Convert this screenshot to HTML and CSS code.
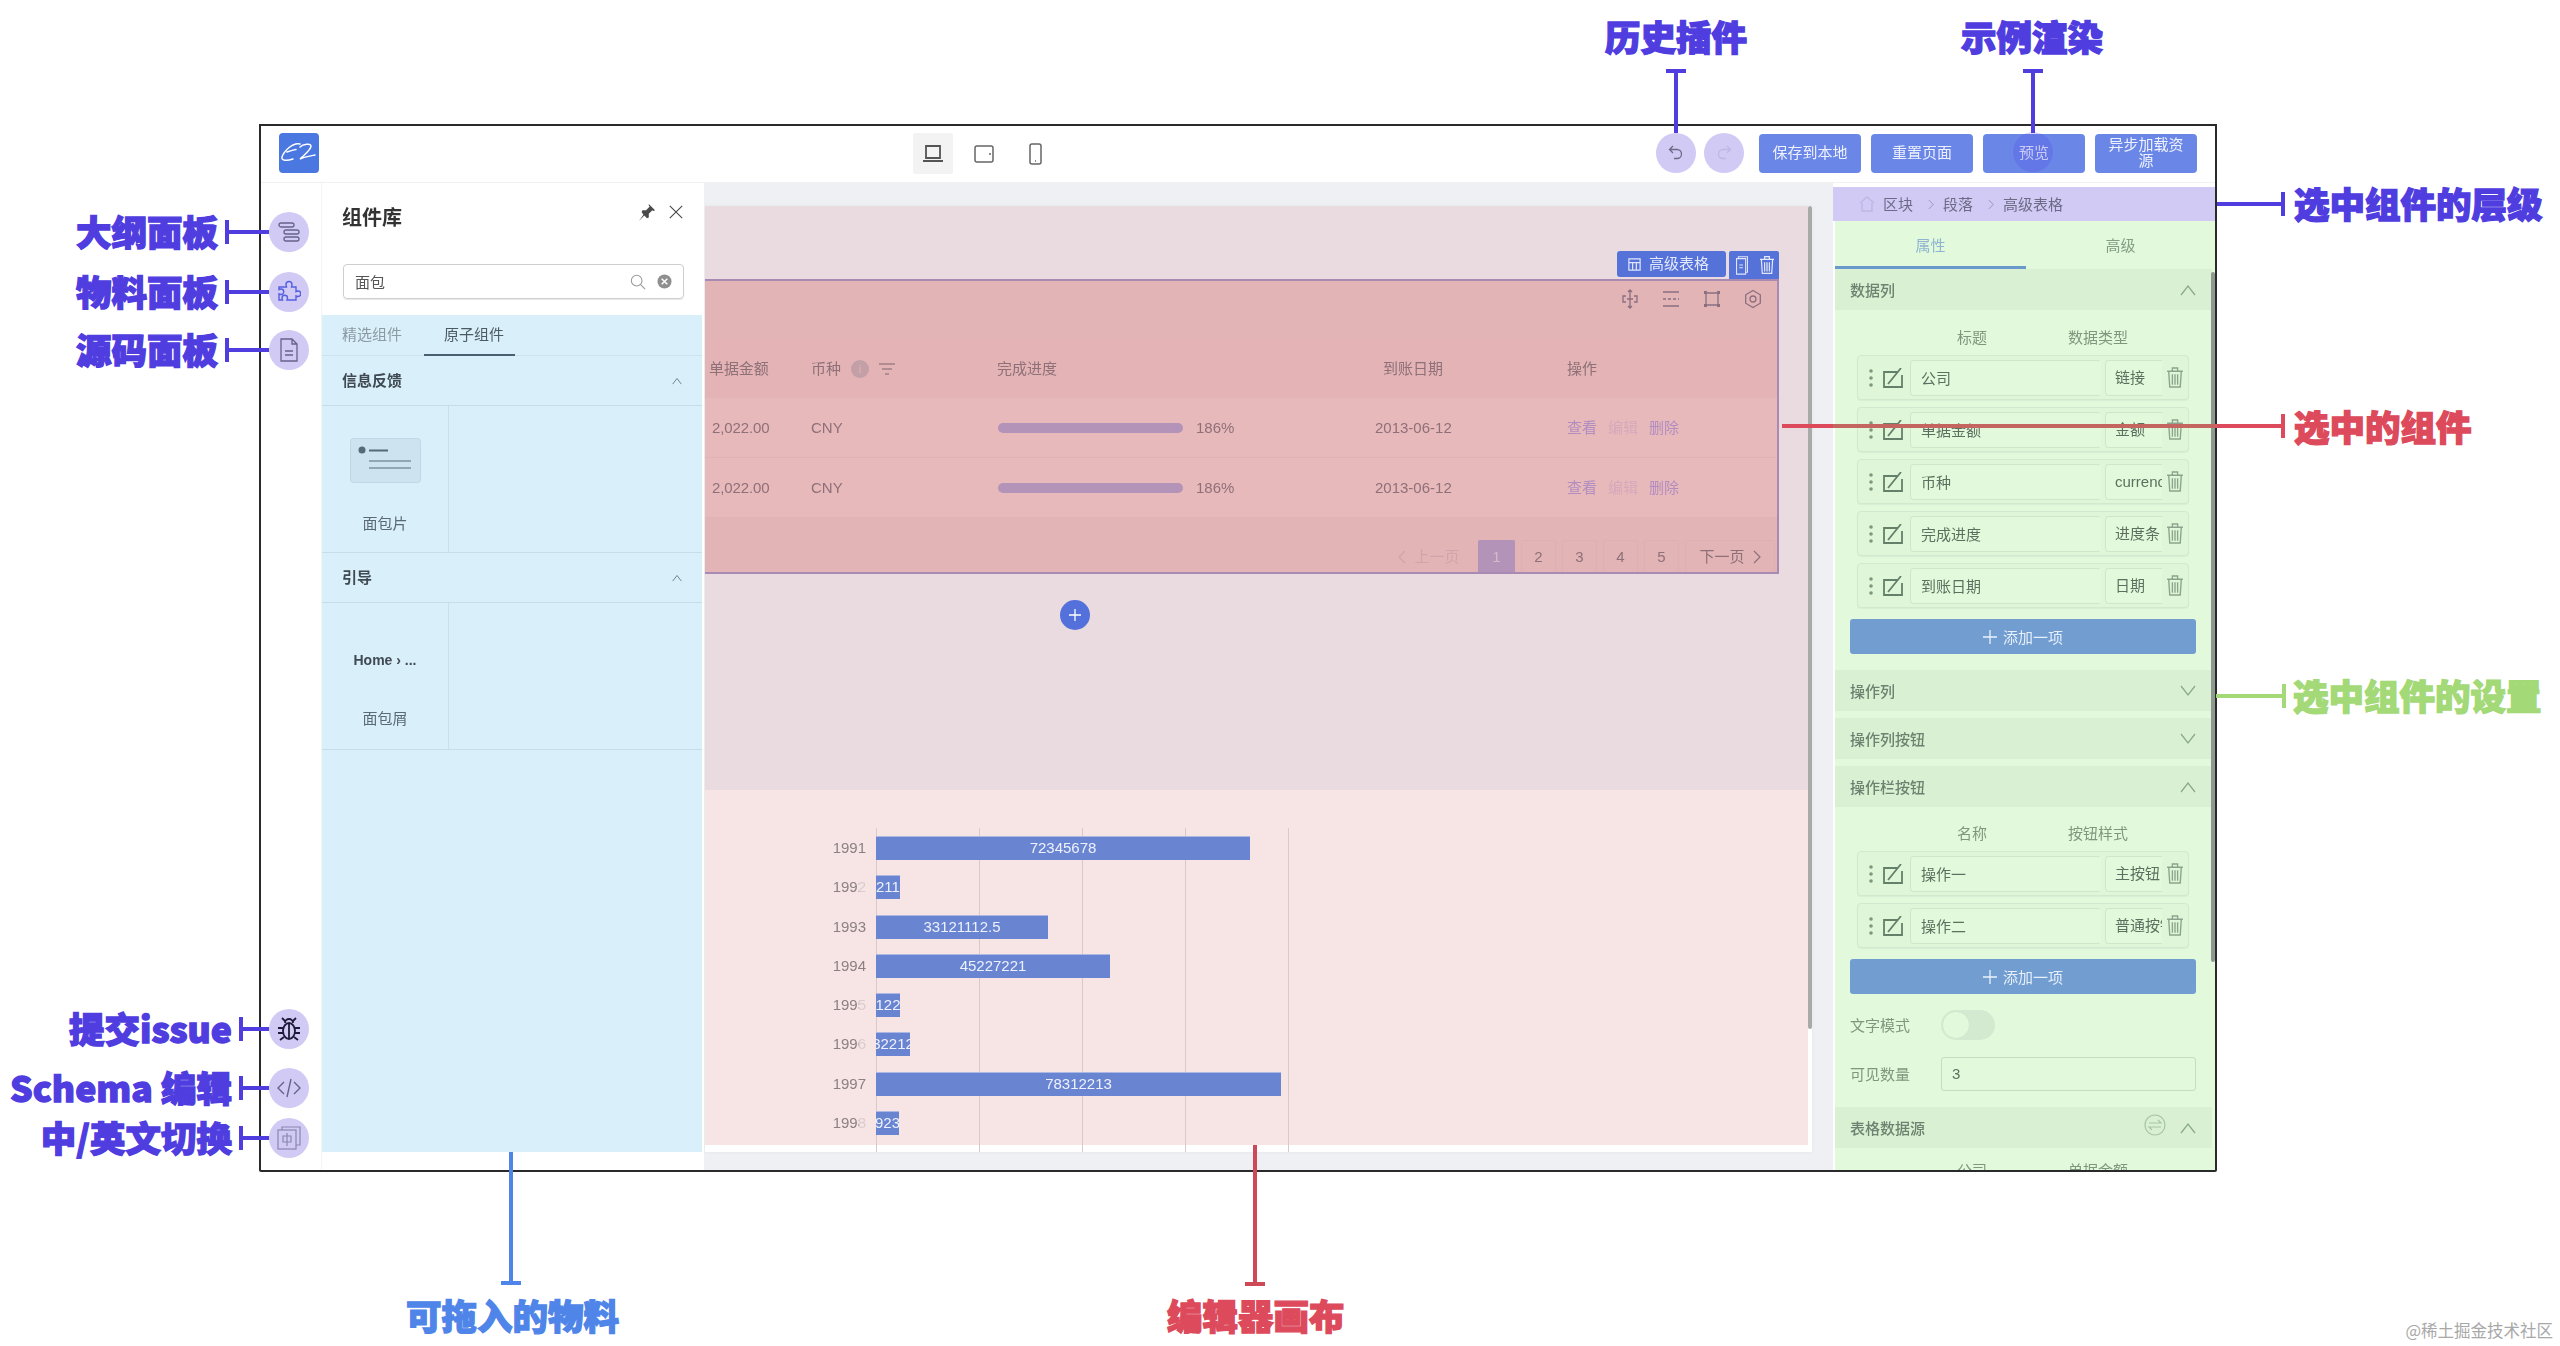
FILE: index.html
```html
<!DOCTYPE html>
<html lang="zh-CN">
<head>
<meta charset="utf-8">
<title>低代码引擎 编辑器</title>
<link rel="stylesheet" href="styles.css">
</head>
<body>
<svg class="defs" aria-hidden="true">
  <symbol id="trash" viewBox="0 0 17 20"><path d="M1 4h15M6 4V1h5v3M2.500 4l1 15h10l1-15M6 7v10M8.500 7v10M11 7v10" fill="none" stroke="currentColor" stroke-width="1.300"/></symbol>
  <symbol id="edit" viewBox="0 0 21 20"><path d="M15 4H1v15h18V7M5 16L18 0" fill="none" stroke="currentColor" stroke-width="1.800"/></symbol>
  <symbol id="dots" viewBox="0 0 6 20"><circle cx="3" cy="3" r="1.800" fill="currentColor"/><circle cx="3" cy="10" r="1.800" fill="currentColor"/><circle cx="3" cy="17" r="1.800" fill="currentColor"/></symbol>
  <symbol id="up" viewBox="0 0 16 12"><path d="M1 11L8 2l7 9" fill="none" stroke="currentColor" stroke-width="1.300"/></symbol>
  <symbol id="down" viewBox="0 0 16 12"><path d="M1 1l7 9 7-9" fill="none" stroke="currentColor" stroke-width="1.300"/></symbol>
</svg>

<div class="stage">
  <div class="window">
    <header class="topbar">
      <svg class="logo" viewBox="0 0 40 40"><rect width="40" height="40" rx="4" fill="#4a78e0"/><path d="M21 11C14 9 5 18 3 24c-1 4 5 4 11 2M8 19c3-1 6-2 9-2.500M21 14c3-3 11-4 11-1 0 4-7 9-11 13 4-2 10-3 15-4" fill="none" stroke="#fff" stroke-width="1.500" stroke-linecap="round"/></svg>
      <div class="devices">
        <span class="device active"><svg viewBox="0 0 24 24" class="device-ic"><path d="M5 4h14v12H5zM2 19h20" fill="none" stroke="currentColor" stroke-width="1.800"/></svg></span>
        <span class="device"><svg viewBox="0 0 24 24" class="device-ic"><rect x="3" y="4" width="18" height="16" rx="2" fill="none" stroke="currentColor" stroke-width="1.500"/><path d="M18 11v2" stroke="currentColor" stroke-width="1.500"/></svg></span>
        <span class="device"><svg viewBox="0 0 24 24" class="device-ic"><rect x="7" y="2" width="11" height="20" rx="2" fill="none" stroke="currentColor" stroke-width="1.500"/><path d="M12 19h1" stroke="currentColor" stroke-width="1.500"/></svg></span>
      </div>
      <div class="actions">
        <span class="round"><svg viewBox="0 0 20 20" class="round-ic"><path d="M7 3L3.500 6.500 7 10M4 6.500h7a4.500 4.500 0 0 1 0 9H8" fill="none" stroke="#6d6a85" stroke-width="1.300"/></svg></span>
        <span class="round"><svg viewBox="0 0 20 20" class="round-ic"><path d="M13 3l3.500 3.500L13 10M16 6.500H9a4.500 4.500 0 0 0 0 9h3" fill="none" stroke="#bdb8e4" stroke-width="1.300"/></svg></span>
        <span class="btn">保存到本地</span>
        <span class="btn">重置页面</span>
        <span class="btn">预览</span>
        <span class="btn">异步加载资源</span>
      </div>
    </header>

    <div class="workspace">
      <nav class="rail">
        <div class="rail-top">
          <span class="circle"><svg viewBox="0 0 24 24" class="circle-ic"><g fill="none" stroke="#66638a" stroke-width="1.300"><rect x="2" y="3" width="15" height="4" rx="2"/><rect x="7" y="10" width="15" height="4" rx="2"/><rect x="7" y="17" width="15" height="4" rx="2"/></g></svg></span>
          <span class="circle"><svg viewBox="0 0 24 24" class="circle-ic"><path d="M9 4.500a3 3 0 0 1 6 0c0 1-.5 1.500-.5 2.500H19v4.500c1-.5 1.500-.5 2-.5a2.700 2.700 0 0 1 0 5.500c-.5 0-1 0-2-.5v4H10c.5-1 .5-1.500.5-2a2.700 2.700 0 0 0-5.500 0c0 .5 0 1 .5 2H2v-6c1 .5 1.500.5 2 .5a2.700 2.700 0 0 0 0-5.500c-.5 0-1 0-2 .5V7h7.500C9.500 6 9 5.500 9 4.500z" fill="none" stroke="#5560e0" stroke-width="1.400"/></svg></span>
          <span class="circle"><svg viewBox="0 0 24 24" class="circle-ic"><path d="M4 1h11l5 5v17H4zM15 1v5h5M8 13h8M8 17h8" fill="none" stroke="#66638a" stroke-width="1.300"/></svg></span>
        </div>
        <div class="rail-bottom">
          <span class="circle"><svg viewBox="0 0 24 24" class="circle-ic"><g fill="none" stroke="#1e1b3a" stroke-width="1.800"><ellipse cx="12" cy="14" rx="6" ry="8"/><path d="M8 6a4 4 0 0 1 8 0M12 6v16M6 11H1M18 11h5M6 16H1M18 16h5M7 20l-4 3M17 20l4 3M8 4L5 1M16 4l3-3"/></g></svg></span>
          <span class="circle"><svg viewBox="0 0 24 24" class="circle-ic"><path d="M7 6l-6 6 6 6M17 6l6 6-6 6M14 3l-4 18" fill="none" stroke="#66638a" stroke-width="1.400"/></svg></span>
          <span class="circle"><svg viewBox="0 0 24 24" class="circle-ic"><g fill="none" stroke="#8a86b0" stroke-width="1.200"><rect x="1" y="4" width="18" height="19"/><path d="M5 4V1h18v18h-4"/><path d="M6 10h8v6H6zM10 7v13"/></g></svg></span>
        </div>
      </nav>

      <aside class="library">
        <div class="lib-head">
          <div class="lib-title-row">
            <h2 class="lib-title">组件库</h2>
            <svg viewBox="0 0 20 20" class="pin"><path d="M12 1l7 7-2 1-1-1-4 4 0 4-2 1-3-3-6 6 5-7-2-3 1-2h4l4-4-1-1z" fill="#4a4a4a"/></svg>
            <svg viewBox="0 0 18 18" class="close"><path d="M2 2l14 14M16 2L2 16" stroke="#444" stroke-width="1.200"/></svg>
          </div>
          <div class="search">
            <span class="search-text">面包</span>
            <svg viewBox="0 0 18 18" class="search-ic"><circle cx="7.500" cy="7.500" r="6" fill="none" stroke="#9a9a9a" stroke-width="1.200"/><path d="M12 12l5 5" stroke="#9a9a9a" stroke-width="1.200"/></svg>
            <svg viewBox="0 0 16 16" class="clear-ic"><circle cx="8" cy="8" r="7.500" fill="#8f8f8f"/><path d="M5 5l6 6M11 5l-6 6" stroke="#fff" stroke-width="1.600"/></svg>
          </div>
        </div>
        <div class="lib-body">
          <div class="lib-tabs">
            <span class="lib-tab">精选组件</span>
            <span class="lib-tab current">原子组件</span>
          </div>
          <div class="lib-group"><b>信息反馈</b><svg class="chev"><use href="#up"/></svg></div>
          <div class="lib-cards">
            <div class="lib-card">
              <svg viewBox="0 0 71 45" class="thumb"><rect x=".5" y=".5" width="70" height="44" rx="3" fill="#cde3ef" stroke="#c0d7e4"/><circle cx="12" cy="12" r="3.500" fill="#566a78"/><path d="M19 12.500h19" stroke="#566a78" stroke-width="2"/><path d="M19 23h42M19 30h42" stroke="#90a8b6" stroke-width="2"/></svg>
              <span class="card-name">面包片</span>
            </div>
          </div>
          <div class="lib-group"><b>引导</b><svg class="chev"><use href="#up"/></svg></div>
          <div class="lib-cards">
            <div class="lib-card crumb">
              <span class="crumb-demo">Home › ...</span>
              <span class="card-name">面包屑</span>
            </div>
          </div>
        </div>
      </aside>

      <main class="canvas">
        <div class="frame">
          <section class="block">
            <div class="sel-tools">
              <span class="sel-name"><svg viewBox="0 0 16 16" class="sel-ic"><path d="M2 2h12v12H2zM2 6h12M6 6v8M10 6v8" fill="none" stroke="#dfe4fb" stroke-width="1.300"/></svg>高级表格</span>
              <span class="sel-ops">
                <svg viewBox="0 0 16 22" class="sel-op"><path d="M4 4V2h10v17h-2M2 4h10v17H2zM5 11h4M5 14h4" fill="none" stroke="#dfe4fb" stroke-width="1.200"/></svg>
                <svg viewBox="0 0 17 20" class="sel-op"><use href="#trash"/></svg>
              </span>
            </div>
            <div class="selected">
              <div class="tbl-tools">
                <svg viewBox="0 0 20 20" class="tool"><path d="M6 7H3v6h3M14 7h3v6h-3M10 1v18M8 3l2-2 2 2M8 17l2 2 2-2M7 10h6" fill="none" stroke="#8b6f80" stroke-width="1.300"/></svg>
                <svg viewBox="0 0 20 20" class="tool"><path d="M2 3h16M2 17h16" fill="none" stroke="#8b6f80" stroke-width="1.300"/><path d="M2 10h16" fill="none" stroke="#8b6f80" stroke-width="1.300" stroke-dasharray="3 2"/></svg>
                <svg viewBox="0 0 20 20" class="tool"><path d="M4 4h12v12H4z" fill="none" stroke="#8b6f80" stroke-width="1.300"/><path d="M2 2h3v3H2zM15 2h3v3h-3zM2 15h3v3H2zM15 15h3v3h-3z" fill="#8b6f80"/></svg>
                <svg viewBox="0 0 20 20" class="tool"><path d="M10 1.500l7.300 4.250v8.500L10 18.500l-7.300-4.250v-8.500z" fill="none" stroke="#8b6f80" stroke-width="1.300"/><circle cx="10" cy="10" r="3" fill="none" stroke="#8b6f80" stroke-width="1.300"/></svg>
              </div>
              <div class="tbl-row tbl-head">
                <span class="first">单据金额</span>
                <span class="cur-head">币种<i class="info">i</i><svg viewBox="0 0 16 12" class="filter"><path d="M0 1h16M3 6h10M6 11h4" stroke="#a08088" stroke-width="1.300"/></svg></span>
                <span>完成进度</span>
                <span class="date">到账日期</span>
                <span>操作</span>
              </div>
              <div class="tbl-row">
                <span class="first">2,022.00</span><span>CNY</span>
                <span class="prog"><i class="prog-bar"></i>186%</span>
                <span class="date">2013-06-12</span>
                <span class="ops"><a>查看</a><a class="off">编辑</a><a>删除</a></span>
              </div>
              <div class="tbl-row">
                <span class="first">2,022.00</span><span>CNY</span>
                <span class="prog"><i class="prog-bar"></i>186%</span>
                <span class="date">2013-06-12</span>
                <span class="ops"><a>查看</a><a class="off">编辑</a><a>删除</a></span>
              </div>
              <div class="pager">
                <span class="pg prev"><svg viewBox="0 0 8 14" class="pg-arrow"><path d="M7 1L1 7l6 6" fill="none" stroke="currentColor" stroke-width="1.200"/></svg>上一页</span>
                <span class="pg num on">1</span>
                <span class="pg num">2</span>
                <span class="pg num">3</span>
                <span class="pg num">4</span>
                <span class="pg num">5</span>
                <span class="pg next">下一页<svg viewBox="0 0 8 14" class="pg-arrow"><path d="M1 1l6 6-6 6" fill="none" stroke="currentColor" stroke-width="1.200"/></svg></span>
              </div>
            </div>
            <span class="add-block"><svg viewBox="0 0 14 14" class="add-ic"><path d="M7 1v12M1 7h12" stroke="#fff" stroke-width="1.300"/></svg></span>
          </section>
          <section class="chart">
            <div class="years">
              <span>1991</span><span class="cut">1992</span><span>1993</span><span>1994</span><span class="cut">1995</span><span class="cut">1996</span><span>1997</span><span class="cut">1998</span>
            </div>
            <div class="plot">
              <div class="bar" style="width:374px">72345678</div>
              <div class="bar" style="width:24px">211</div>
              <div class="bar" style="width:172px">33121112.5</div>
              <div class="bar" style="width:234px">45227221</div>
              <div class="bar" style="width:24px">122</div>
              <div class="bar" style="width:34px">32212</div>
              <div class="bar" style="width:405px">78312213</div>
              <div class="bar" style="width:23px">923</div>
            </div>
          </section>
          <span class="scroll"></span>
        </div>
      </main>

      <aside class="settings">
        <div class="crumbs">
          <svg viewBox="0 0 16 16" class="crumb-ic"><path d="M1 7L8 1l7 6M3 7v8h10V7" fill="none" stroke="#bdb8e4" stroke-width="1.500"/></svg>
          <span>区块</span><svg class="crumb-sep" viewBox="0 0 8 12"><path d="M1 1l5 5-5 5" fill="none" stroke="#918eb0"/></svg><span>段落</span><svg class="crumb-sep" viewBox="0 0 8 12"><path d="M1 1l5 5-5 5" fill="none" stroke="#918eb0"/></svg><span>高级表格</span>
        </div>
        <div class="green">
          <div class="set-tabs"><span class="set-tab current">属性</span><span class="set-tab">高级</span></div>
          <div class="sec-head"><b>数据列</b><svg class="sec-chev"><use href="#up"/></svg></div>
          <div class="cols"><span>标题</span><span>数据类型</span></div>
          <div class="items">
            <div class="item"><svg class="dots"><use href="#dots"/></svg><svg class="edit"><use href="#edit"/></svg><span class="f-name">公司</span><span class="f-type">链接</span><svg class="del"><use href="#trash"/></svg></div>
            <div class="item"><svg class="dots"><use href="#dots"/></svg><svg class="edit"><use href="#edit"/></svg><span class="f-name">单据金额</span><span class="f-type">金额</span><svg class="del"><use href="#trash"/></svg></div>
            <div class="item"><svg class="dots"><use href="#dots"/></svg><svg class="edit"><use href="#edit"/></svg><span class="f-name">币种</span><span class="f-type">currency</span><svg class="del"><use href="#trash"/></svg></div>
            <div class="item"><svg class="dots"><use href="#dots"/></svg><svg class="edit"><use href="#edit"/></svg><span class="f-name">完成进度</span><span class="f-type">进度条</span><svg class="del"><use href="#trash"/></svg></div>
            <div class="item"><svg class="dots"><use href="#dots"/></svg><svg class="edit"><use href="#edit"/></svg><span class="f-name">到账日期</span><span class="f-type">日期</span><svg class="del"><use href="#trash"/></svg></div>
          </div>
          <div class="add-item"><svg viewBox="0 0 14 14" class="plus"><path d="M7 0v14M0 7h14" stroke="#eaf3fb" stroke-width="1.300"/></svg>添加一项</div>
          <div class="sec-head spaced"><b>操作列</b><svg class="sec-chev"><use href="#down"/></svg></div>
          <div class="sec-head gap"><b>操作列按钮</b><svg class="sec-chev"><use href="#down"/></svg></div>
          <div class="sec-head gap"><b>操作栏按钮</b><svg class="sec-chev"><use href="#up"/></svg></div>
          <div class="cols tight"><span>名称</span><span>按钮样式</span></div>
          <div class="items">
            <div class="item"><svg class="dots"><use href="#dots"/></svg><svg class="edit"><use href="#edit"/></svg><span class="f-name">操作一</span><span class="f-type">主按钮</span><svg class="del"><use href="#trash"/></svg></div>
            <div class="item"><svg class="dots"><use href="#dots"/></svg><svg class="edit"><use href="#edit"/></svg><span class="f-name">操作二</span><span class="f-type">普通按钮</span><svg class="del"><use href="#trash"/></svg></div>
          </div>
          <div class="add-item"><svg viewBox="0 0 14 14" class="plus"><path d="M7 0v14M0 7h14" stroke="#eaf3fb" stroke-width="1.300"/></svg>添加一项</div>
          <div class="field first-field"><label>文字模式</label><span class="toggle"><i></i></span></div>
          <div class="field"><label>可见数量</label><span class="num-input">3</span></div>
          <div class="sec-head spaced"><b>表格数据源</b><svg viewBox="0 0 22 22" class="swap"><circle cx="11" cy="11" r="10" fill="none" stroke="#a9c4a8" stroke-width="1.200"/><path d="M5 9h12l-3-3M17 13H5l3 3" fill="none" stroke="#a9c4a8" stroke-width="1.200"/></svg><svg class="sec-chev"><use href="#up"/></svg></div>
          <div class="cols last"><span>公司</span><span>单据金额</span></div>
          <span class="set-scroll"></span>
        </div>
      </aside>
    </div>
  </div>
</div>

<svg class="overlay" viewBox="0 0 2560 1346" aria-hidden="true">
  <circle cx="2033" cy="152" r="20" fill="#4c3fe0" fill-opacity=".22"/>
  <g stroke="#4f3de0" stroke-width="4" fill="none">
    <path d="M1676 71v62M1666 71h20M2033 71v62M2023 71h20"/>
    <path d="M2217 204h66M2283 192v24"/>
    <path d="M227 232h42M227 220v24M227 292h42M227 280v24M227 350h42M227 338v24"/>
    <path d="M241 1029h28M241 1017v24M241 1088h28M241 1076v24M241 1138h28M241 1126v24"/>
  </g>
  <g fill="none" stroke-width="4">
    <path d="M1782 426h51" stroke="#dc4a5c"/>
    <path d="M1833 426h384" stroke="#c4655f"/>
    <path d="M2217 426h66M2283 414v24" stroke="#dc4a5c"/>
    <path d="M1255 1145v139M1245 1284h20" stroke="#cf4858"/>
    <path d="M2216 696h68M2284 684v24" stroke="#a3d977"/>
    <path d="M511 1152v131M501 1283h20" stroke="#4f85e8"/>
  </g>
</svg>

<span class="note violet n-history">历史插件</span>
<span class="note violet n-demo">示例渲染</span>
<span class="note violet n-level">选中组件的层级</span>
<span class="note red n-selected">选中的组件</span>
<span class="note green-text n-setting">选中组件的设置</span>
<span class="note violet n-outline">大纲面板</span>
<span class="note violet n-material">物料面板</span>
<span class="note violet n-source">源码面板</span>
<span class="note violet n-issue">提交issue</span>
<span class="note violet n-schema">Schema 编辑</span>
<span class="note violet n-lang">中/英文切换</span>
<span class="note blue n-drag">可拖入的物料</span>
<span class="note red n-canvas">编辑器画布</span>
<span class="watermark">@稀土掘金技术社区</span>
</body>
</html>
```

FILE: styles.css
```css
* { box-sizing: border-box; }
html, body { margin: 0; padding: 0; }
body {
  position: relative;
  width: 2560px;
  height: 1346px;
  overflow: hidden;
  background: #fff;
  font: 15px/20px "Liberation Sans", "Noto Sans CJK SC", sans-serif;
  color: #555;
}
.defs { position: absolute; width: 0; height: 0; }
.stage { padding: 124px 0 0 259px; filter: blur(.4px); }
.window {
  width: 1958px;
  height: 1048px;
  border: 2px solid #2a2a2a;
  border-radius: 0 0 2px 2px;
  display: flex;
  flex-direction: column;
  overflow: hidden;
  background: #fff;
}

/* top bar */
.topbar {
  height: 57px;
  flex: none;
  display: flex;
  align-items: flex-start;
  padding: 7px 18px 0;
  border-bottom: 1px solid #f1f1f1;
}
.logo { width: 40px; height: 40px; flex: none; }
.devices { display: flex; margin-left: 594px; }
.device { width: 40px; height: 41px; margin-right: 11px; display: flex; align-items: center; justify-content: center; color: #666; border-radius: 2px; }
.device.active { background: #f3f3f3; color: #555; }
.device-ic { width: 24px; height: 24px; }
.actions { margin-left: auto; display: flex; align-items: center; }
.round { width: 40px; height: 40px; border-radius: 50%; background: #d0caf5; display: flex; align-items: center; justify-content: center; margin-right: 8px; }
.round + .round { margin-right: 15px; }
.round-ic { width: 20px; height: 20px; }
.btn {
  width: 102px; height: 39px; margin-left: 10px;
  flex: none;
  display: flex; align-items: center; justify-content: center; text-align: center;
  padding: 0 10px;
  background: #6a87e8; color: #eef1fd;
  border-radius: 4px;
  font-size: 15px; line-height: 16px;
}
.round + .btn { margin-left: 0; }

.workspace { flex: 1; min-height: 0; display: grid; grid-template-columns: 61px 382px 1129px 382px; }

/* rail */
.rail { display: flex; flex-direction: column; justify-content: space-between; padding: 29px 0 12px 8px; border-right: 1px solid #f4f4f6; }
.rail-top { display: flex; flex-direction: column; }
.rail-top .circle:nth-child(2) { margin-top: 20px; }
.rail-top .circle:nth-child(3) { margin-top: 18px; }
.rail-bottom { display: flex; flex-direction: column; }
.rail-bottom .circle:nth-child(2) { margin-top: 19px; }
.rail-bottom .circle:nth-child(3) { margin-top: 10px; }
.circle { width: 40px; height: 40px; border-radius: 50%; background: #d0caf5; display: flex; align-items: center; justify-content: center; }
.circle-ic { width: 24px; height: 24px; }

/* library */
.library { display: flex; flex-direction: column; background: #fff; }
.lib-head { height: 132px; flex: none; padding: 20px 20px 0; }
.lib-title-row { display: flex; align-items: flex-start; height: 28px; }
.lib-title { margin: 0; font: 700 20px/28px "Noto Sans CJK SC", sans-serif; color: #333; }
.pin { width: 18px; height: 18px; margin: 0 0 0 auto; }
.close { width: 16px; height: 16px; margin: 1px 0 0 12px; }
.search { margin: 33px 0 0 1px; height: 35px; border: 1px solid #cfcfcf; border-radius: 4px; display: flex; align-items: center; padding: 0 11px; box-shadow: 0 1px 1px #e8e8e8; }
.search-text { font: 15px/20px "Noto Sans CJK SC", sans-serif; color: #555; margin-right: auto; }
.search-ic { width: 16px; height: 16px; }
.clear-ic { width: 15px; height: 15px; margin-left: 11px; }
.lib-body { height: 837px; margin-right: 2px; background: #d9effa; }
.lib-tabs { height: 41px; display: flex; border-bottom: 1px solid #cfe3ef; padding-left: 20px; align-items: stretch; }
.lib-tab { width: 61px; padding-top: 9px; font: 15px/20px "Noto Sans CJK SC", sans-serif; color: #8b9aa3; white-space: nowrap; }
.lib-tab.current { width: 91px; margin-left: 21px; padding-left: 20px; color: #4c5a63; border-bottom: 2px solid #4c5f70; height: 41px; }
.lib-group { height: 50px; display: flex; align-items: center; justify-content: space-between; padding: 0 20px 0 20px; border-bottom: 1px solid #c9dde9; }
.lib-group b { font: 700 15px/20px "Noto Sans CJK SC", sans-serif; color: #3f4a52; position: relative; top: -1px; }
.chev { width: 10px; height: 8px; color: #5f6b73; }
.lib-cards { height: 147px; border-bottom: 1px solid #c9dde9; }
.lib-card { width: 127px; height: 100%; border-right: 1px solid #cbdfea; display: flex; flex-direction: column; align-items: center; padding-top: 32px; }
.thumb { width: 71px; height: 45px; flex: none; }
.card-name { font: 15px/20px "Noto Sans CJK SC", sans-serif; color: #5a6a74; margin-top: 30px; }
.crumb { padding-top: 44px; }
.crumb-demo { font: 700 14px/20px "Liberation Sans", sans-serif; color: #3f4a52; height: 20px; position: relative; top: 3px; }
.crumb .card-name { margin-top: 41px; }

/* canvas */
.canvas { background: #eef0f3; padding: 23px 21px 18px 1px; min-height: 0; overflow: hidden; }
.frame { position: relative; width: 1107px; height: 946px; background: #fff; overflow: hidden; box-shadow: 0 0 3px #e2e4e8; }
.scroll { position: absolute; right: 0; top: 0; width: 4px; height: 823px; background: #a9a9a9; border-radius: 2px; }
.block { height: 584px; background: #e9dbdf; padding-top: 45px; margin-right: 4px; }
.sel-tools { height: 28px; padding-right: 29px; display: flex; justify-content: flex-end; gap: 3px; }
.sel-name { width: 109px; height: 26px; background: #5572d8; color: #e4e8fb; border-radius: 3px; display: flex; align-items: center; padding-left: 10px; font-size: 15px; gap: 7px; }
.sel-ic { width: 15px; height: 15px; flex: none; }
.sel-ops { width: 50px; height: 28px; background: #5572d8; color: #e4e8fb; border-radius: 2px 2px 0 0; display: flex; align-items: center; justify-content: center; gap: 9px; }
.sel-op { width: 16px; height: 20px; }
.selected {
  width: 1074px; height: 295px;
  margin-right: 29px;
  background: #e3b4b6;
  border: solid #a88ab5; border-width: 2px 2px 2px 0;
  color: #8e7078;
}
.tbl-tools { height: 59px; display: flex; justify-content: flex-end; gap: 21px; padding: 8px 14px 0 0; }
.tool { width: 20px; height: 20px; }
.tbl-row { height: 60px; display: grid; grid-template-columns: 106px 186px 378px 192px 1fr; align-items: center; background: #e8b9bb; border-bottom: 1px solid #e2b2b5; }
.tbl-head { height: 58px; background: #e3b3b5; }
.first { padding-left: 5px; }
.tbl-row .first { padding-left: 7px; letter-spacing: -.1px; }
.tbl-head .first { padding-left: 4px; }
.cur-head { display: flex; align-items: center; }
.info { width: 18px; height: 18px; border-radius: 50%; background: #c3a0a8; color: #e3b3b5; font: 11px/18px "Liberation Sans", sans-serif; text-align: center; margin-left: 10px; }
.filter { width: 16px; height: 12px; margin-left: 10px; }
.date { width: 76px; text-align: center; white-space: nowrap; }
.prog { display: flex; align-items: center; gap: 13px; font-size: 15px; }
.prog-bar { width: 185px; height: 10px; border-radius: 5px; background: #b393b8; margin-left: 1px; }
.ops { display: flex; gap: 11px; color: #b18dc0; }
.ops .off { color: #d4a9bb; }
.pager { height: 54px; display: flex; justify-content: flex-end; align-items: flex-end; gap: 6px; padding-right: 2px; }
.pg { height: 32px; border: 1px solid #deb0b3; border-bottom: 0; display: flex; align-items: center; justify-content: center; gap: 8px; border-radius: 2px 2px 0 0; }
.pg-arrow { width: 8px; height: 14px; }
.num { width: 35px; }
.on { width: 37px; background: #b393b8; color: #d9b9c6; border-color: #b393b8; }
.prev { width: 74px; border-color: transparent; color: #d0a4aa; margin-right: 6px; }
.next { width: 90px; }
.add-block { width: 30px; height: 30px; border-radius: 50%; background: #5470db; display: flex; align-items: center; justify-content: center; margin: 26px 0 0 355px; }
.add-ic { width: 14px; height: 14px; }
.chart {
  height: 362px; position: relative; display: flex; padding-top: 38px;
  background: linear-gradient(#f6e5e4 355px, #fff 355px);
  margin-right: 4px;
}
.years { width: 171px; padding-top: 8px; display: flex; flex-direction: column; color: #8d8083; text-align: right; padding-right: 10px; }
.years span { height: 39.3px; line-height: 24px; }
.years .cut { -webkit-mask-image: linear-gradient(90deg, #000 calc(100% - 7px), rgba(0,0,0,.25) calc(100% - 7px)); mask-image: linear-gradient(90deg, #000 calc(100% - 7px), rgba(0,0,0,.25) calc(100% - 7px)); }
.plot {
  width: 414px; padding-top: 8px; display: flex; flex-direction: column; gap: 15.3px;
  background: repeating-linear-gradient(90deg, #d9c9cb 0 1px, transparent 1px 103px);
}
.bar { height: 24px; background: #6985d2; color: #eef1fb; display: flex; justify-content: center; line-height: 22px; overflow: hidden; flex: none; border-top: 1px solid #aeb8e4; white-space: nowrap; }

/* settings */
.settings { padding-top: 4px; display: flex; flex-direction: column; min-height: 0; }
.crumbs { height: 34px; flex: none; background: #d0caf5; display: flex; align-items: center; padding-left: 26px; font: 15px/20px "Noto Sans CJK SC", sans-serif; color: #6d6a85; }
.crumb-ic { width: 16px; height: 16px; margin-right: 8px; }
.crumb-sep { width: 7px; height: 11px; margin: 0 8px 0 15px; }
.green { flex: 1; min-height: 0; margin-left: 2px; background: #e2fadb; overflow: hidden; position: relative; }
.set-tabs { height: 48px; display: grid; grid-template-columns: 191px 189px; }
.set-tab { display: flex; align-items: center; justify-content: center; font: 15px/20px "Noto Sans CJK SC", sans-serif; color: #849d86; }
.set-tab.current { color: #8fb4d2; border-bottom: 3px solid #6a9acb; padding-top: 3px; }
.sec-head { width: 377px; height: 41px; background: #d9f1d2; display: flex; align-items: center; padding: 0 16px 0 15px; color: #6d8270; flex: none; }
.sec-head b { font: 500 15px/20px "Noto Sans CJK SC", sans-serif; margin-right: auto; }
.sec-chev { width: 16px; height: 12px; color: #8ba98c; }
.spaced { margin-top: 16px; }
.gap { margin-top: 7px; }
.swap { width: 22px; height: 22px; margin-right: 14px; margin-top: -6px; }
.cols { height: 45px; padding: 17px 0 0 122px; display: flex; font: 15px/20px "Noto Sans CJK SC", sans-serif; color: #7f977f; }
.cols span { width: 125px; }
.cols span:first-child { width: 30px; margin-right: 81px; }
.cols.tight { height: 44px; padding-top: 16px; }
.items { display: flex; flex-direction: column; gap: 7px; margin-left: 22px; }
.item { width: 332px; height: 45px; display: flex; align-items: center; border: 1px solid #d2e9cd; border-radius: 4px; box-shadow: 0 1px 1px #d9eed4; background: #dff6d8; padding-left: 10px; }
.dots { width: 6px; height: 20px; color: #7f977f; flex: none; }
.edit { width: 21px; height: 20px; color: #64806a; margin-left: 9px; flex: none; }
.f-name { width: 191px; height: 36px; margin-left: 6px; flex: none; padding: 0 10px; background: #e2fadb; border: 1px solid #d0e6cb; border-right-color: #e2fadb; border-radius: 4px; font: 15px/34px "Noto Sans CJK SC", sans-serif; color: #5d6f5f; }
.f-type { width: 57px; height: 36px; margin-left: 4px; flex: none; padding: 0 0 0 9px; background: #e2fadb; border: 1px solid #d0e6cb; border-right: 0; border-radius: 4px 0 0 4px; font: 15px/34px "Liberation Sans", "Noto Sans CJK SC", sans-serif; color: #5d6f5f; overflow: hidden; white-space: nowrap; }
.del { width: 18px; height: 21px; color: #8aa48b; margin-left: 4px; flex: none; }
.add-item { width: 346px; height: 35px; margin: 11px 0 0 15px; border-radius: 3px; background: #729dd0; color: #e6effa; display: flex; align-items: center; justify-content: center; gap: 6px; font: 15px/20px "Noto Sans CJK SC", sans-serif; }
.plus { width: 14px; height: 14px; }
.field { display: flex; align-items: center; margin: 17px 0 0 15px; font: 15px/20px "Noto Sans CJK SC", sans-serif; color: #7f977f; }
.field label { width: 91px; }
.first-field { margin-top: 16px; }
.toggle { width: 54px; height: 30px; border-radius: 15px; background: #d3ead0; display: block; padding: 1px; }
.toggle i { display: block; width: 28px; height: 28px; border-radius: 50%; background: #e2fadb; border: 1px solid #d2e8cd; }
.num-input { width: 255px; height: 34px; padding: 0 10px; border: 1px solid #c6ddc1; border-radius: 3px; font: 15px/32px "Liberation Sans", sans-serif; color: #5d6f5f; }
.cols.last { padding-top: 12px; }
.set-scroll { position: absolute; right: 0; top: 51px; width: 4px; height: 690px; background: #8e9a90; border-radius: 2px; }

/* annotations */
.overlay { position: absolute; left: 0; top: 0; width: 2560px; height: 1346px; pointer-events: none; }
.note {
  position: absolute;
  font: 900 35.5px/38px "Noto Sans CJK SC", sans-serif;
  -webkit-text-stroke: 1.3px currentColor;
  white-space: nowrap;
}
.violet { color: #4f3de0; }
.red { color: #dc4a5c; }
.green-text { color: #a3d977; }
.blue { color: #4f85e8; }
.n-history { left: 1605px; top: 17px; }
.n-demo { left: 1961px; top: 17px; }
.n-level { left: 2294px; top: 184px; }
.n-selected { left: 2294px; top: 407px; }
.n-setting { left: 2293px; top: 676px; }
.n-outline { left: 76px; top: 212px; }
.n-material { left: 76px; top: 272px; }
.n-source { left: 76px; top: 330px; }
.n-issue { right: 2328px; top: 1009px; }
.n-schema { right: 2328px; top: 1068px; }
.n-lang { right: 2328px; top: 1118px; }
.n-drag { left: 406px; top: 1296px; }
.n-canvas { left: 1167px; top: 1296px; }
.watermark { position: absolute; right: 7px; top: 1320px; font: 16.5px/20px "Noto Sans CJK SC", sans-serif; color: #a8a8a8; }
```
